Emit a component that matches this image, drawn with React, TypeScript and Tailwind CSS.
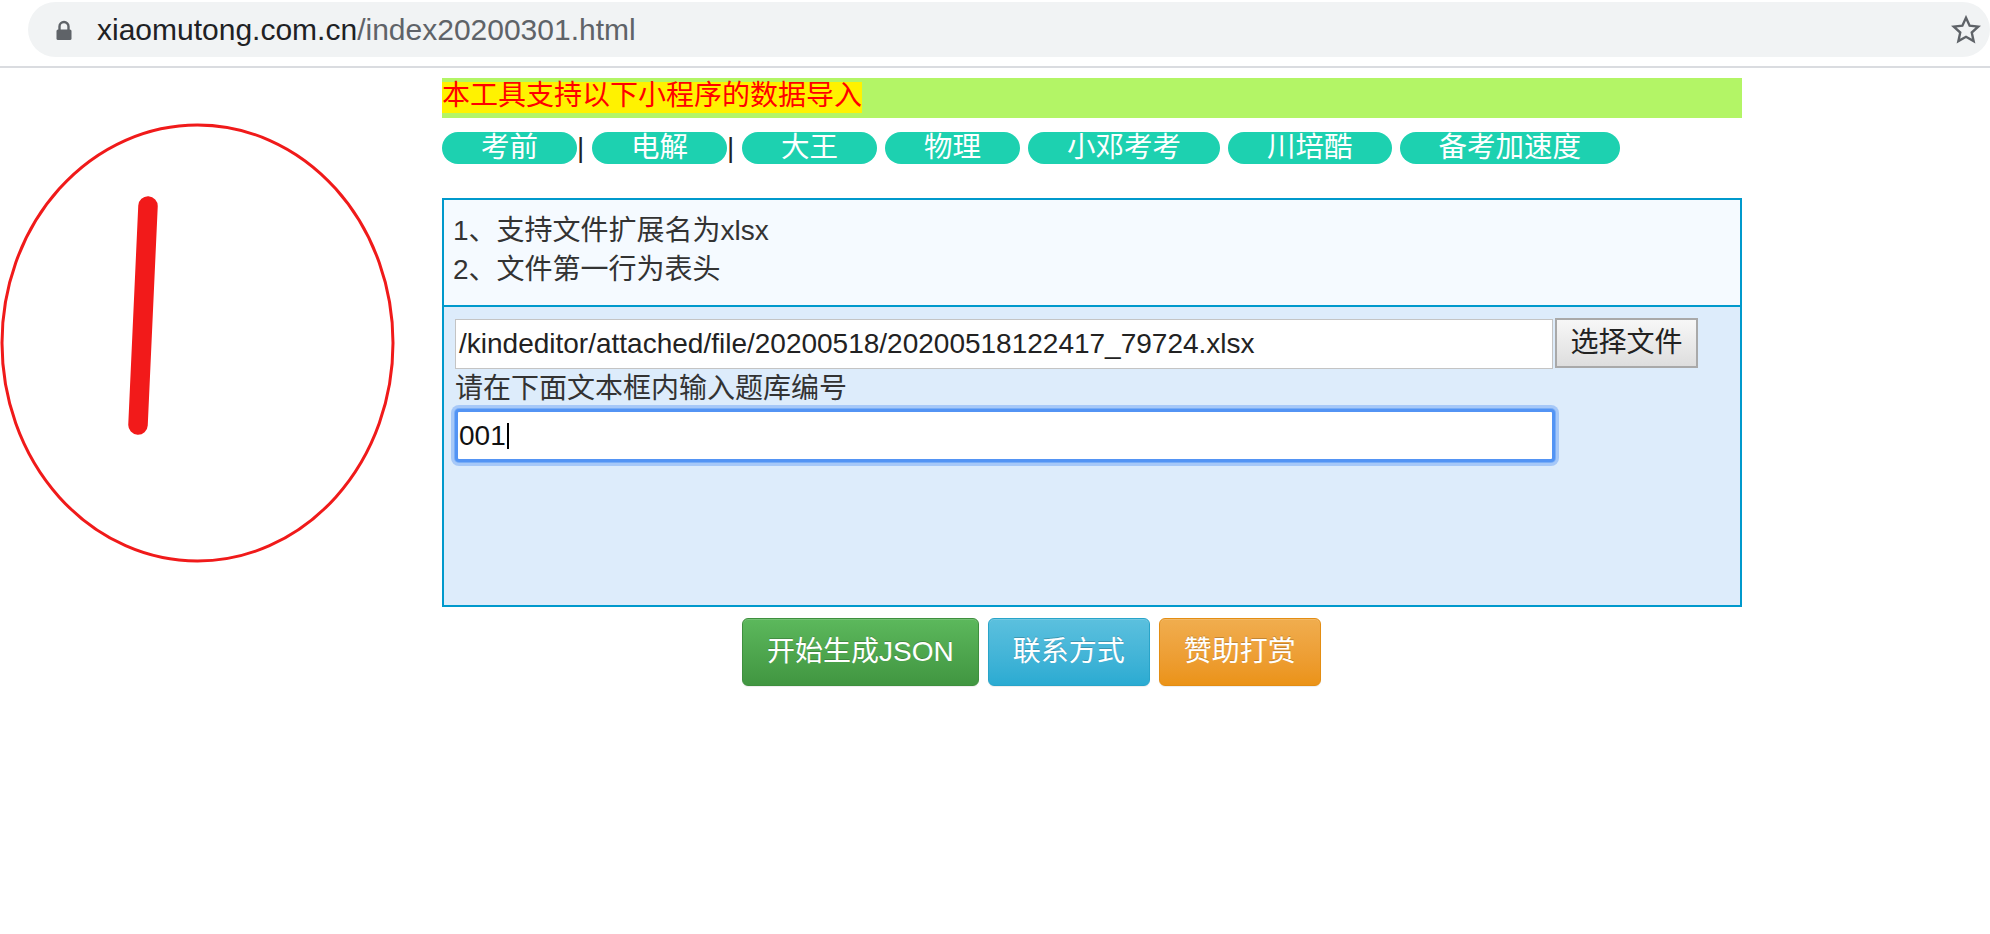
import React from "react";

// Browser chrome + the xlsx → JSON import tool page.

const tabs: { label: string; sep?: boolean }[] = [
  { label: "考前", sep: true },
  { label: "电解", sep: true },
  { label: "大王" },
  { label: "物理" },
  { label: "小邓考考" },
  { label: "川培酷" },
  { label: "备考加速度" },
];

export default function App() {
  return (
    <div className="w-[1990px] h-[934px] overflow-hidden bg-white font-['Liberation_Sans','Noto_Sans_CJK_SC',sans-serif] text-[#333]">
      <AddressBar />
      <div className="flex">
        <div className="w-[442px] shrink-0 pt-[52px]">
          <Doodle />
        </div>
        <main className="w-[1300px] shrink-0 pt-[10px]">
          <div className="flex h-[40px] items-start bg-[#b3f566] pt-[4px]">
            <span className="h-[31px] whitespace-nowrap bg-[#fff200] text-[28px] leading-[28px] text-[#ff0000]">
              本工具支持以下小程序的数据导入
            </span>
          </div>

          <nav className="mt-[14px] flex items-center">
            {tabs.map((t) => (
              <React.Fragment key={t.label}>
                <span className="h-[32px] rounded-full bg-[#1dd1b0] px-[39px] text-[28.5px] leading-[31px] text-white">
                  {t.label}
                </span>
                {t.sep ? (
                  <span className="mr-[8px] w-[7px] text-center text-[28px] leading-[32px] text-[#222]">
                    |
                  </span>
                ) : (
                  <span className="w-[8px]" />
                )}
              </React.Fragment>
            ))}
          </nav>

          <section className="mt-[34px] border-2 border-[#0099cc]">
            <div className="bg-[#f5faff] pl-[9px] pt-[11px] pb-[16px] text-[28px] leading-[39px]">
              <p>1、支持文件扩展名为xlsx</p>
              <p>2、文件第一行为表头</p>
            </div>
            <div className="h-[300px] border-t-2 border-[#0099cc] bg-[#ddecfb] pl-[11px] pt-[11px] text-[28px]">
              <div className="flex items-start">
                <div className="mt-[1px] flex h-[50px] w-[1098px] items-center border border-[#c4c4c4] bg-white pl-[3px] text-[#222]">
                  /kindeditor/attached/file/20200518/20200518122417_79724.xlsx
                </div>
                <div className="ml-[2px] flex h-[50px] w-[143px] items-center justify-center border-2 border-[#a9a9a9] bg-linear-to-b from-[#f7f7f7] to-[#dedede] text-[#222]">
                  选择文件
                </div>
              </div>
              <p className="leading-[39px]">请在下面文本框内输入题库编号</p>
              <div className="mt-[1px] flex h-[53px] w-[1100px] items-center rounded-[4px] border-[3px] border-[#5394f4] bg-white pl-[1px] text-[#111] shadow-[0_0_0_1px_#7aaef6,0_0_0_4px_#a6c8f8]">
                <span>001</span>
                <span className="ml-[1px] h-[26px] w-[2px] bg-black" />
              </div>
            </div>
          </section>

          <div className="mt-[11px] flex gap-[9px] pl-[300px]">
            <Btn className="border-[#3e8f3e] from-[#5cb85c] to-[#419641]">开始生成JSON</Btn>
            <Btn className="border-[#28a4c9] from-[#5bc0de] to-[#2aabd2]">联系方式</Btn>
            <Btn className="border-[#e38d13] from-[#f0ad4e] to-[#eb9316]">赞助打赏</Btn>
          </div>
        </main>
      </div>
    </div>
  );
}

function Btn({ className, children }: { className: string; children: React.ReactNode }) {
  return (
    <button
      type="button"
      className={
        "flex h-[68px] items-center rounded-[6px] border bg-linear-to-b px-[24px] text-[28px] text-white [text-shadow:0_-1px_0_rgba(0,0,0,0.2)] shadow-[inset_0_1px_0_rgba(255,255,255,0.15),0_1px_1px_rgba(0,0,0,0.075)] " +
        className
      }
    >
      {children}
    </button>
  );
}

function AddressBar() {
  return (
    <header className="flex h-[68px] border-b-2 border-[#dadce0] bg-white">
      <div className="mt-[2px] ml-[28px] flex h-[55px] flex-1 items-center rounded-full bg-[#f1f3f4] pl-[28px] pr-[9px]">
        <svg width="16" height="21" viewBox="0 0 16 21" className="shrink-0">
          <path d="M3.5 11V7.5a4.5 4.5 0 0 1 9 0V11" fill="none" stroke="#5f6368" strokeWidth="2.4" />
          <rect x="0.5" y="10.5" width="15" height="10.5" rx="1.5" fill="#5f6368" />
        </svg>
        <div className="ml-[25px] flex-1 text-[30px] leading-none">
          <span className="text-[#202124]">xiaomutong.com.cn</span>
          <span className="text-[#5f6368]">/index20200301.html</span>
        </div>
        <svg width="30" height="30" viewBox="0 0 24 24" className="shrink-0">
          <polygon
            points="12,2.2 14.9,8.6 21.8,9.3 16.6,14 18.1,20.9 12,17.4 5.9,20.9 7.4,14 2.2,9.3 9.1,8.6"
            fill="none"
            stroke="#5f6368"
            strokeWidth="1.9"
            strokeLinejoin="miter"
          />
        </svg>
      </div>
    </header>
  );
}

function Doodle() {
  return (
    <svg width="404" height="446" viewBox="0 0 404 446">
      <ellipse cx="197.5" cy="223" rx="195.5" ry="218" fill="none" stroke="#f01a1a" strokeWidth="3" />
      <line x1="148" y1="86" x2="138" y2="305" stroke="#f21a1a" strokeWidth="19.5" strokeLinecap="round" />
    </svg>
  );
}
